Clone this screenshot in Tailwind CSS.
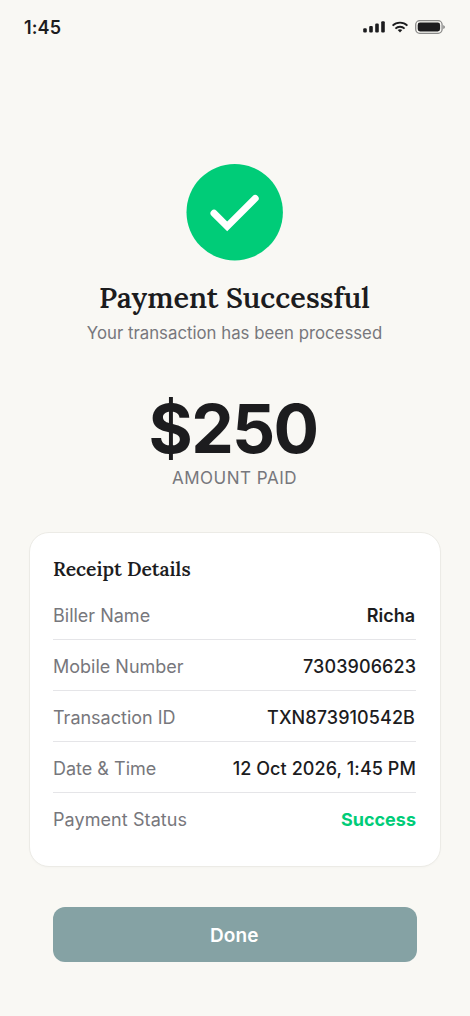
<!DOCTYPE html>
<html lang="en">
<head>
<meta charset="utf-8">
<title>Payment Successful</title>
<script src="https://cdn.jsdelivr.net/npm/@tailwindcss/browser@4"></script>
</head>
<body class="bg-[#f9f8f4] font-['Inter',sans-serif] text-[#1c1c1e]">
<main class="flex h-[1016px] w-[470px] flex-col overflow-hidden">
  <header class="flex h-[54px] shrink-0 items-center justify-between pl-6 pr-6">
    <span class="pt-px text-[18px] leading-none font-semibold tracking-[0.1px]">1:45</span>
    <svg class="h-[14px] w-[83px]" viewBox="363 20 83 14" fill="#1c1c1e">
      <rect x="363.2" y="28.3" width="3.6" height="4.2" rx="1.1"/><rect x="369.2" y="26" width="3.6" height="6.5" rx="1.1"/><rect x="375.2" y="23.6" width="3.6" height="8.9" rx="1.1"/><rect x="381.2" y="21.2" width="3.6" height="11.3" rx="1.1"/>
      <g fill="none" stroke="#1c1c1e" stroke-width="1.8"><path d="M392.6 25.7a10.6 10.6 0 0 1 14.8 0M395.4 28.6a6.6 6.6 0 0 1 9.2 0"/></g>
      <path d="M397.7 30.1a3.8 3.8 0 0 1 4.6 0L400 32.4z"/>
      <rect x="415.7" y="20.7" width="26.4" height="12.6" rx="4" fill="none" stroke="#1c1c1e" stroke-opacity=".5" stroke-width="1.3"/>
      <rect x="417.7" y="22.6" width="22.4" height="8.8" rx="2.3"/><path d="M443.4 24.9v4.2c1.8-.8 1.8-3.4 0-4.2z" opacity=".65"/>
    </svg>
  </header>
  <section class="mt-[110px] flex w-[469px] shrink-0 flex-col items-center">
    <svg class="size-[97px]" viewBox="0 0 97 97"><circle cx="48.7" cy="48.2" r="48.2" fill="#00cc78"/><path d="M28 49.2 41.2 62.4 69.2 34.4" fill="none" stroke="#fff" stroke-width="7" stroke-linecap="round"/></svg>
    <h1 class="mt-[19px] h-9 text-[28.8px] leading-9 font-semibold whitespace-nowrap font-['Lora',serif]">Payment Successful</h1>
    <p class="mt-[5px] h-6 text-[16.8px] leading-6 font-normal text-[#77777c]">Your transaction has been processed</p>
    <p class="mt-[47px] h-[74px] pr-[3px] text-[67.6px] leading-[74px] font-bold tracking-[-1.7px]">$250</p>
    <p class="h-6 text-[17px] leading-6 tracking-[0.5px] text-[#77777c]">AMOUNT PAID</p>
  </section>
  <section class="mx-[29px] mt-[42px] h-[335px] w-[412px] shrink-0 rounded-[20px] border border-[#ecebe6] bg-white px-[23px] pt-[23px] shadow-[0_1px_2px_rgba(0,0,0,0.02)]">
    <h2 class="h-[33px] text-[19.3px] leading-[26px] font-semibold font-['Lora',serif]">Receipt Details</h2>
    <dl class="w-[363px] text-[18px] leading-[53px] [&_dt]:text-[#77777c]">
      <div class="flex h-[51px] justify-between border-b border-[#e5e5e8]"><dt>Biller Name</dt><dd class="pr-px font-semibold">Richa</dd></div>
      <div class="flex h-[51px] justify-between border-b border-[#e5e5e8]"><dt>Mobile Number</dt><dd class="font-medium tracking-[0.08px]">7303906623</dd></div>
      <div class="flex h-[51px] justify-between border-b border-[#e5e5e8]"><dt>Transaction ID</dt><dd class="pr-px font-medium tracking-[0.08px]">TXN873910542B</dd></div>
      <div class="flex h-[51px] justify-between border-b border-[#e5e5e8]"><dt>Date &amp; Time</dt><dd class="font-medium tracking-[0.08px]">12 Oct 2026, 1:45 PM</dd></div>
      <div class="flex h-[51px] justify-between"><dt class="tracking-[0.08px]">Payment Status</dt><dd class="font-bold text-[#00cc78]">Success</dd></div>
    </dl>
  </section>
  <button class="mx-[53px] mt-10 h-[55px] w-[363.5px] shrink-0 rounded-xl bg-[#85a2a4] pt-0.5 pr-px text-[19px] leading-none font-semibold tracking-[0.1px] text-white">Done</button>
</main>
</body>
</html>
